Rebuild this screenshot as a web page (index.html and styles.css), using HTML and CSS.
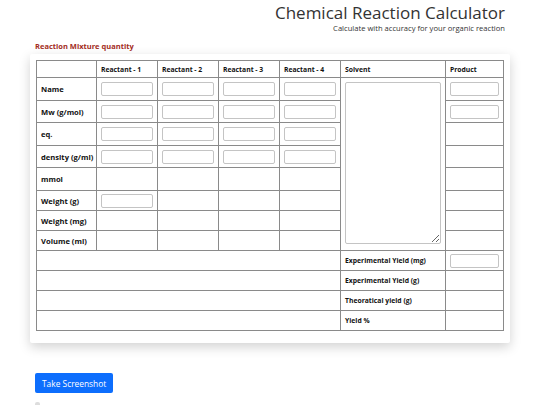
FILE: index.html
```html
<!DOCTYPE html>
<html lang="en">

<head>
    <meta charset="UTF-8">
    <meta name="viewport" content="width=device-width, initial-scale=1.0">
    <title>Chemical Reaction Calculator</title>
    <link rel="stylesheet" href="styles.css">
</head>

<body>

    <!-- Header -->
    <header class="page-header">
        <h1>Chemical Reaction Calculator</h1>
        <p class="subtitle">Calculate with accuracy for your organic reaction</p>
    </header>

    <main class="content">
        <h2 class="section-title">Reaction Mixture quantity</h2>

        <!-- Calculator card -->
        <div class="calc-card">
            <table class="calc-table">
                <colgroup>
                    <col class="c-label">
                    <col class="c-react">
                    <col class="c-react">
                    <col class="c-react">
                    <col class="c-react">
                    <col class="c-solvent">
                    <col class="c-product">
                </colgroup>
                <tr class="row-head">
                    <th></th>
                    <th>Reactant - 1</th>
                    <th>Reactant - 2</th>
                    <th>Reactant - 3</th>
                    <th>Reactant - 4</th>
                    <th>Solvent</th>
                    <th>Product</th>
                </tr>
                <tr class="row-a">
                    <th class="row-label">Name</th>
                    <td><input type="text"></td>
                    <td><input type="text"></td>
                    <td><input type="text"></td>
                    <td><input type="text"></td>
                    <td rowspan="8" class="solvent-cell"><textarea></textarea></td>
                    <td><input type="text"></td>
                </tr>
                <tr class="row-b">
                    <th class="row-label">Mw (g/mol)</th>
                    <td><input type="text"></td>
                    <td><input type="text"></td>
                    <td><input type="text"></td>
                    <td><input type="text"></td>
                    <td><input type="text"></td>
                </tr>
                <tr class="row-a">
                    <th class="row-label">eq.</th>
                    <td><input type="text"></td>
                    <td><input type="text"></td>
                    <td><input type="text"></td>
                    <td><input type="text"></td>
                    <td></td>
                </tr>
                <tr class="row-b">
                    <th class="row-label">density (g/ml)</th>
                    <td><input type="text"></td>
                    <td><input type="text"></td>
                    <td><input type="text"></td>
                    <td><input type="text"></td>
                    <td></td>
                </tr>
                <tr class="row-a">
                    <th class="row-label">mmol</th>
                    <td></td>
                    <td></td>
                    <td></td>
                    <td></td>
                    <td></td>
                </tr>
                <tr class="row-c">
                    <th class="row-label">Weight (g)</th>
                    <td><input type="text"></td>
                    <td></td>
                    <td></td>
                    <td></td>
                    <td></td>
                </tr>
                <tr class="row-c">
                    <th class="row-label">Weight (mg)</th>
                    <td></td>
                    <td></td>
                    <td></td>
                    <td></td>
                    <td></td>
                </tr>
                <tr class="row-c">
                    <th class="row-label">Volume (ml)</th>
                    <td></td>
                    <td></td>
                    <td></td>
                    <td></td>
                    <td></td>
                </tr>
                <!-- Yield section -->
                <tr class="row-yield">
                    <td colspan="5"></td>
                    <th>Experimental Yield (mg)</th>
                    <td><input type="text"></td>
                </tr>
                <tr class="row-yield">
                    <td colspan="5"></td>
                    <th>Experimental Yield (g)</th>
                    <td></td>
                </tr>
                <tr class="row-yield">
                    <td colspan="5"></td>
                    <th>Theoratical yield (g)</th>
                    <td></td>
                </tr>
                <tr class="row-yield">
                    <td colspan="5"></td>
                    <th>Yield %</th>
                    <td></td>
                </tr>
            </table>
        </div>

        <button class="btn-primary">Take Screenshot</button>
        <div class="shot-holder"></div>
    </main>

</body>

</html>
```

FILE: styles.css
```css
/* General Reset */
* {
    margin: 0;
    padding: 0;
    box-sizing: border-box;
}

body {
    background-color: #fff;
    color: #212529;
    font-family: "Open Sans", "Noto Sans", sans-serif;
}

/* Header */
.page-header {
    text-align: right;
    padding: 2px 35px 0 0;
}

.page-header h1 {
    font-size: 17px;
    font-weight: 400;
    line-height: 22px;
    color: #333;
}

.subtitle {
    font-size: 7.6px;
    line-height: 9px;
    color: #333;
}

/* Content */
.content {
    padding: 0 30px;
}

.section-title {
    font-size: 7.5px;
    font-weight: 700;
    color: #a32c1c;
    margin: 7px 0 0 5px;
    line-height: 12px;
}

.calc-card {
    background-color: #fff;
    padding: 6px 7px 12px 6px;
    margin-top: 2px;
    box-shadow: 0 4px 12px rgba(0, 0, 0, 0.18);
    border-radius: 2px;
}

/* Table */
.calc-table {
    width: 100%;
    border-collapse: collapse;
    table-layout: fixed;
    font-size: 6.8px;
}

.c-label { width: 60px; }
.c-react { width: 61px; }
.c-solvent { width: 105px; }
.c-product { width: 58px; }

.calc-table th,
.calc-table td {
    border: 1px solid #8a8a8a;
    padding: 0 4px;
    text-align: left;
    vertical-align: middle;
}

.calc-table th {
    font-weight: 700;
    color: #111;
}

.calc-table .row-label {
    font-size: 7.6px;
    white-space: nowrap;
}

.row-head { height: 17px; }
.row-a { height: 23px; }
.row-b { height: 22px; }
.row-c { height: 20px; }
.row-yield { height: 20px; }

.calc-table input {
    display: block;
    width: 100%;
    height: 14px;
    border: 1px solid #c4c4c4;
    border-radius: 2px;
    background: #fff;
}

.solvent-cell {
    padding: 4px 4px 6px 4px !important;
}

.calc-table textarea {
    display: block;
    width: 100%;
    height: 162px;
    border: 1px solid #c4c4c4;
    border-radius: 2px;
    background: #fff;
}

/* Button */
.btn-primary {
    display: block;
    margin: 30px 0 0 5px;
    background-color: #0d6efd;
    color: #fff;
    border: none;
    border-radius: 2px;
    padding: 0 7px;
    height: 20px;
    font-size: 8.4px;
    font-family: "Open Sans", "Noto Sans", sans-serif;
}

.shot-holder {
    width: 5px;
    height: 3px;
    margin: 9px 0 0 5px;
    background-color: #ddd;
    border-radius: 2px 2px 0 0;
}
```
